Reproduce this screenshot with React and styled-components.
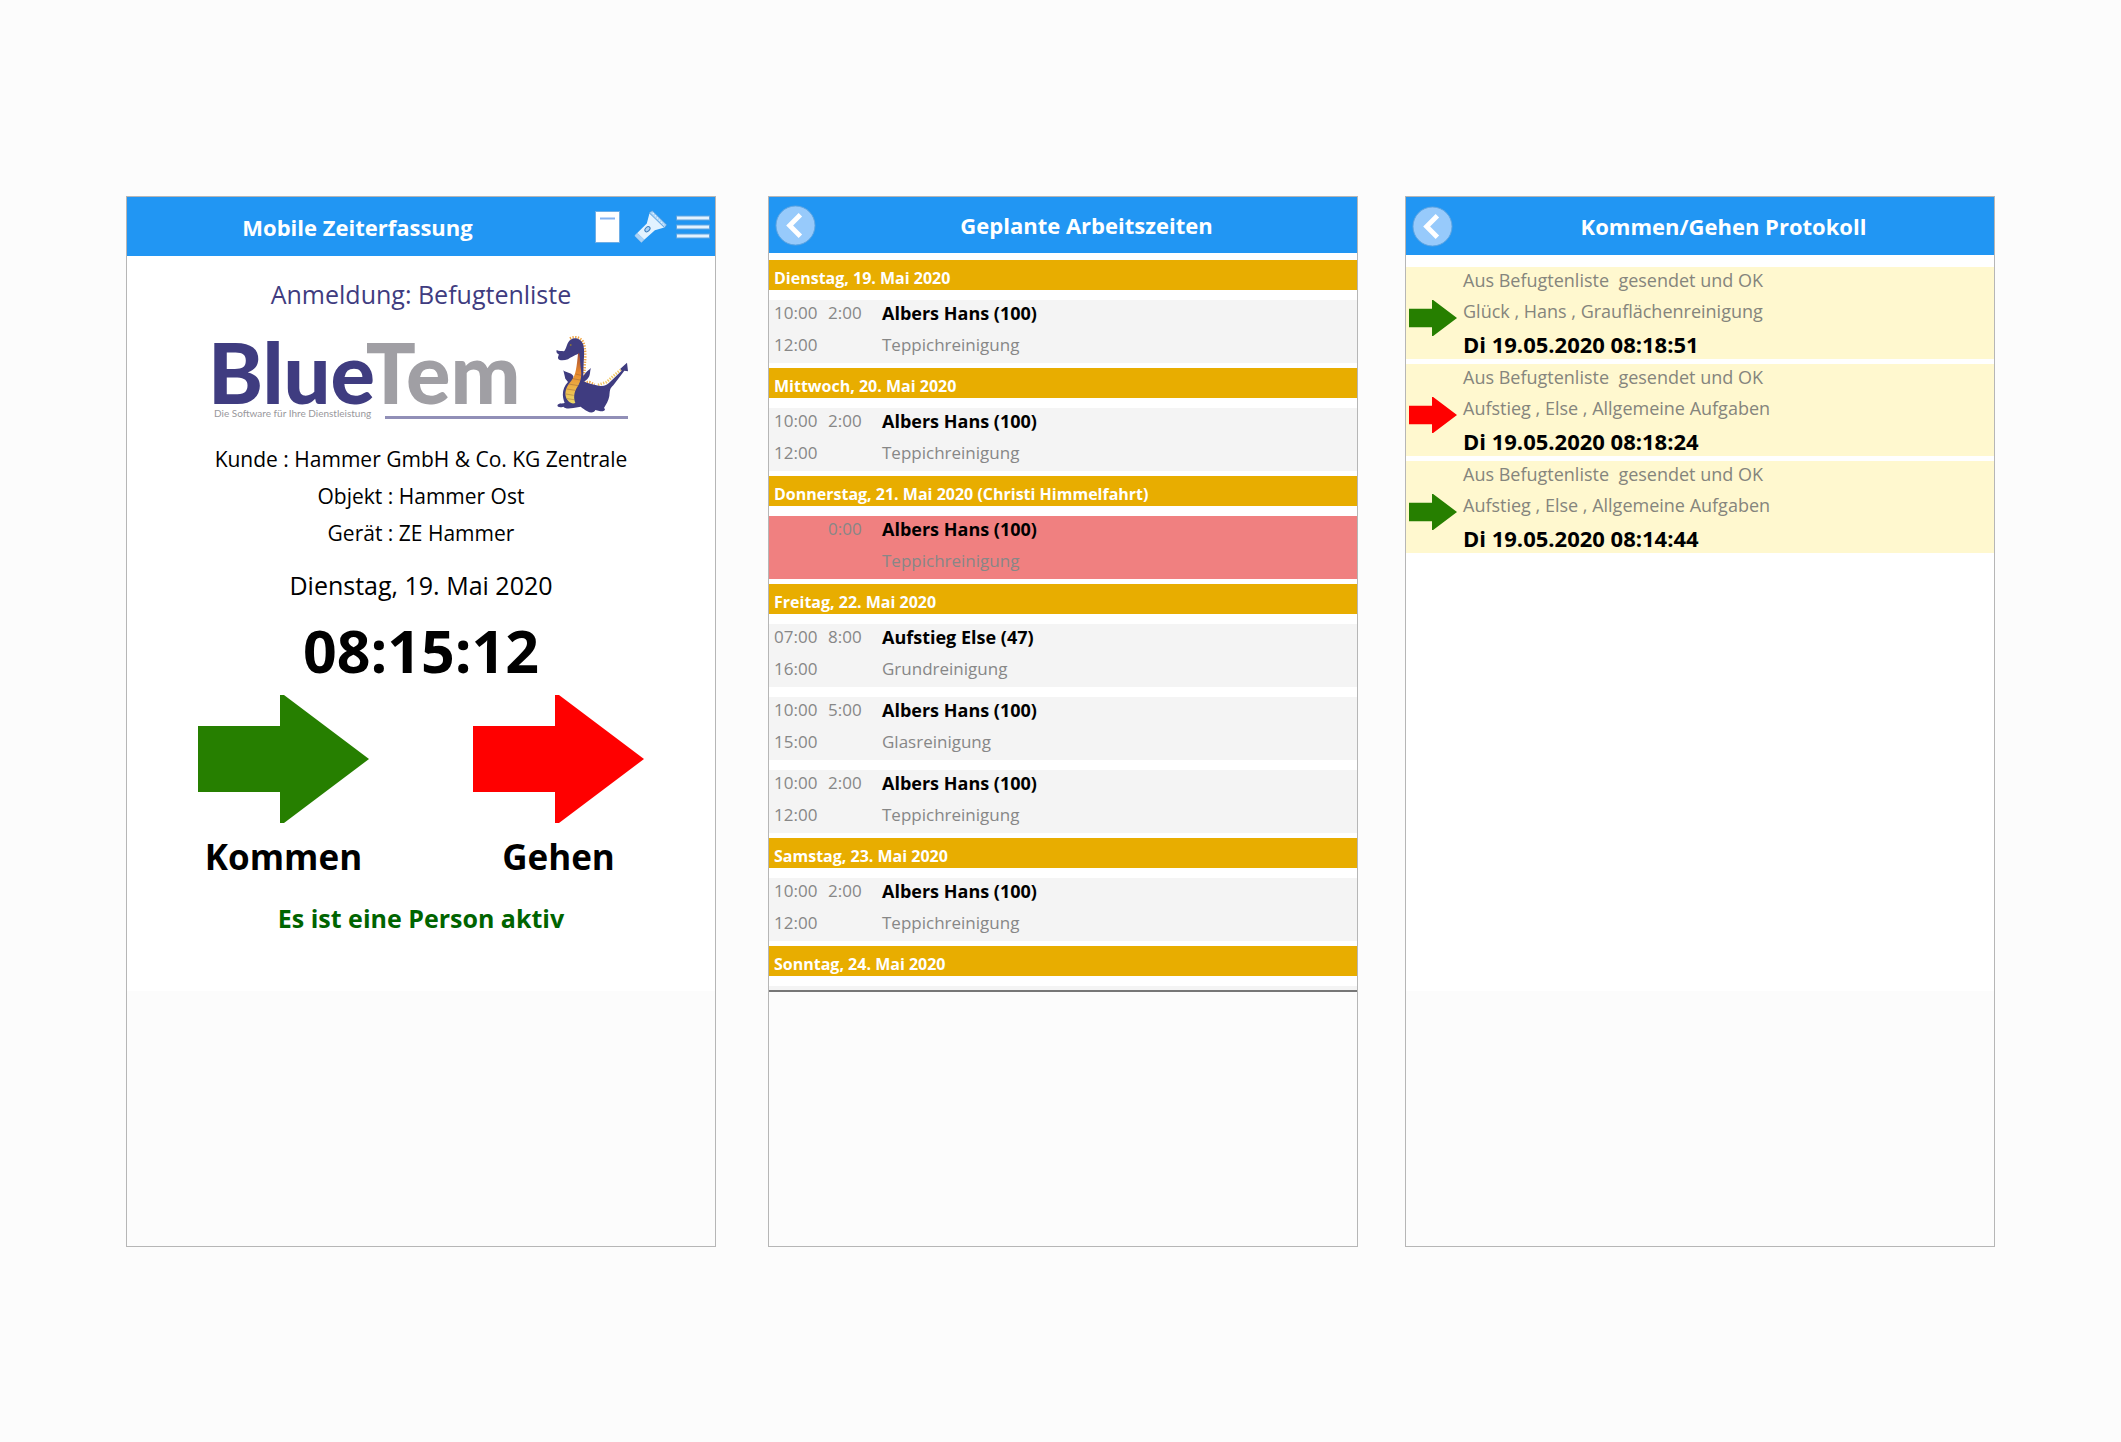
import styled, { createGlobalStyle } from "styled-components"

const days = [
    {
        title: "Dienstag, 19. Mai 2020",
        shifts: [{ from: "10:00", to: "12:00", hours: "2:00", name: "Albers Hans (100)", task: "Teppichreinigung" }],
    },
    {
        title: "Mittwoch, 20. Mai 2020",
        shifts: [{ from: "10:00", to: "12:00", hours: "2:00", name: "Albers Hans (100)", task: "Teppichreinigung" }],
    },
    {
        title: "Donnerstag, 21. Mai 2020 (Christi Himmelfahrt)",
        shifts: [{ from: "", to: "", hours: "0:00", name: "Albers Hans (100)", task: "Teppichreinigung", holiday: true }],
    },
    {
        title: "Freitag, 22. Mai 2020",
        shifts: [
            { from: "07:00", to: "16:00", hours: "8:00", name: "Aufstieg Else (47)", task: "Grundreinigung" },
            { from: "10:00", to: "15:00", hours: "5:00", name: "Albers Hans (100)", task: "Glasreinigung" },
            { from: "10:00", to: "12:00", hours: "2:00", name: "Albers Hans (100)", task: "Teppichreinigung" },
        ],
    },
    {
        title: "Samstag, 23. Mai 2020",
        shifts: [{ from: "10:00", to: "12:00", hours: "2:00", name: "Albers Hans (100)", task: "Teppichreinigung" }],
    },
];

const entries = [
    { status: "Aus Befugtenliste  gesendet und OK", person: "Glück , Hans , Grauflächenreinigung", time: "Di 19.05.2020 08:18:51", color: "#267f00" },
    { status: "Aus Befugtenliste  gesendet und OK", person: "Aufstieg , Else , Allgemeine Aufgaben", time: "Di 19.05.2020 08:18:24", color: "#ff0000" },
    { status: "Aus Befugtenliste  gesendet und OK", person: "Aufstieg , Else , Allgemeine Aufgaben", time: "Di 19.05.2020 08:14:44", color: "#267f00" },
];

const Arrow = ({ color }) => (
    <svg viewBox="0 0 171 128" preserveAspectRatio="none" aria-hidden="true">
        <path d="M0 31H82V0H86L171 64L86 128H82V97H0Z" fill={color} />
    </svg>
);

const Dragon = () => (
    <svg viewBox="18 18 216 231" aria-hidden="true">
        <defs>
            <linearGradient id="belly" x1="0" y1="0" x2="0" y2="1">
                <stop offset="0" stopColor="#a04a35" />
                <stop offset="0.4" stopColor="#e8892c" />
                <stop offset="0.75" stopColor="#eebb4d" />
                <stop offset="1" stopColor="#e9d968" />
            </linearGradient>
        </defs>
        {/* spikes along the neck, back and tail */}
        <g fill="none" stroke="#f0a645" strokeWidth="8" strokeDasharray="4 4">
            <path d="M60 26C76 16 94 24 100 38C107 56 106 84 104 104C104 124 101 140 98 152" />
            <path d="M102 158L118 156L134 164" />
            <path d="M144 165L170 156L190 138L214 118" stroke="#f2c763" />
        </g>
        <g fill="#3f3c80">
            <path d="M20 60C26 64 34 62 42 64C50 56 50 36 62 29C76 20 94 27 100 44C104 60 102 80 101 98L99 162L78 166L84 104C86 92 88 80 84 72C74 76 62 82 54 88C42 92 28 92 25 87C22 80 28 76 26 73C20 70 18 66 20 60Z" />
            <path d="M86 164L98 152C112 160 128 162 146 167C160 170 170 166 180 156L215 122L211 116L231 98L234 124L223 122L190 166C178 176 180 184 178 198C176 212 168 224 162 234C170 240 160 246 148 243L136 240C134 248 122 250 112 244C104 238 98 236 92 230L70 234C56 236 44 236 40 230C28 234 20 230 23 224C28 218 38 222 44 218C34 196 38 172 54 156L46 146L40 121C50 130 62 126 70 138L70 152L86 164Z" />
            <path d="M92 160C96 138 106 128 123 114C118 126 124 140 106 152Z" />
        </g>
        <path d="M87 68C91 80 90 100 93 120C96 142 90 160 80 174C72 188 70 204 76 219C64 224 52 214 48 202C43 184 50 168 64 152C78 136 80 110 84 72Z" fill="url(#belly)" />
        <path d="M77 132L93 136M68 146L91 150M56 162L85 167M50 177L76 181M48 192L71 196M51 206L72 209" stroke="#8a5538" strokeWidth="2" opacity="0.6" />
        <circle cx="62" cy="45" r="3" fill="#86733a" />
    </svg>
);

const BackButton = () => (
    <Back type="button" aria-label="Zurück">
        <svg viewBox="0 0 42 42" width="41" height="41" aria-hidden="true">
            <circle cx="21" cy="21" r="20" fill="#97cafb" stroke="#5fa3df" />
            <path d="M26 10L15 21L26 32" fill="none" stroke="#fff" strokeWidth="5" />
        </svg>
    </Back>
);

const App = () => {
    return (
        <Page>
            <GlobalStyle />

            <Panel>
                <Screen>
                    <Header $height={59}>
                        <Title>Mobile Zeiterfassung</Title>
                        <Actions>
                            <IconButton type="button" aria-label="Liste">
                                <svg viewBox="0 0 50 64" width="25" height="32" aria-hidden="true">
                                    <rect x="1" y="1" width="48" height="62" fill="#fff" stroke="#6eaee6" strokeWidth="2" />
                                    <path d="M10 15H40" stroke="#85b3f2" strokeWidth="4" />
                                </svg>
                            </IconButton>
                            <IconButton type="button" aria-label="Taschenlampe">
                                <svg viewBox="12 14 98 98" width="33" height="33" aria-hidden="true">
                                    <path d="M58 24L102 66L74 74L34 110L14 90L50 54Z" fill="#e2f2ff" />
                                    <path d="M57 22L66 16L109 58L103 67Z" fill="#a9d3f8" stroke="#5296d4" strokeWidth="2" />
                                    <path d="M68 23L100 57" stroke="#e2f2ff" strokeWidth="4" strokeDasharray="4 5" />
                                    <path d="M14 91L22 83L42 102L34 111Z" fill="#a9d3f8" stroke="#5fa3df" />
                                    <ellipse cx="52" cy="71" rx="9" ry="6" transform="rotate(-45 52 71)" fill="#a9d3f8" stroke="#3f7fbd" strokeWidth="3" />
                                </svg>
                            </IconButton>
                            <IconButton type="button" aria-label="Menü">
                                <svg viewBox="0 0 34 32" width="34" height="32" aria-hidden="true">
                                    <path d="M0 7H34M0 16H34M0 25H34" stroke="#5fa3df" strokeWidth="5" />
                                    <path d="M1 7H33M1 16H33M1 25H33" stroke="#e2f2ff" strokeWidth="3" />
                                </svg>
                            </IconButton>
                        </Actions>
                    </Header>

                    <Clock>
                        <Login>Anmeldung: Befugtenliste</Login>

                        <Logo>
                            <Brand>
                                <BrandName>Blue<span>Tem</span></BrandName>
                                <Dragon />
                            </Brand>
                            <Tagline>Die Software für Ihre Dienstleistung</Tagline>
                        </Logo>

                        <Details>
                            <li>Kunde : Hammer GmbH &amp; Co. KG Zentrale</li>
                            <li>Objekt : Hammer Ost</li>
                            <li>Gerät : ZE Hammer</li>
                        </Details>

                        <Today>Dienstag, 19. Mai 2020</Today>
                        <Time>08:15:12</Time>

                        <Stamps>
                            <StampButton type="button"><Arrow color="#267f00" />Kommen</StampButton>
                            <StampButton type="button"><Arrow color="#ff0000" />Gehen</StampButton>
                        </Stamps>

                        <Active>Es ist eine Person aktiv</Active>
                    </Clock>
                </Screen>
            </Panel>

            <Panel $gap={52}>
                <Screen $cut>
                    <Header $height={56}>
                        <BackButton />
                        <Title>Geplante Arbeitszeiten</Title>
                    </Header>

                    <Schedule>
                        {days.map((day) => (
                            <Day key={day.title}>
                                <DayTitle>{day.title}</DayTitle>
                                {day.shifts.map((shift, i) => (
                                    <Shift key={i} $holiday={shift.holiday}>
                                        <span>{shift.from}</span>
                                        <span>{shift.hours}</span>
                                        <strong>{shift.name}</strong>
                                        <span>{shift.to}</span>
                                        <span />
                                        <span>{shift.task}</span>
                                    </Shift>
                                ))}
                            </Day>
                        ))}
                        <DayTitle>Sonntag, 24. Mai 2020</DayTitle>
                        <NextShift />
                    </Schedule>
                </Screen>
            </Panel>

            <Panel $gap={47}>
                <Screen>
                    <Header $height={58}>
                        <BackButton />
                        <Title>Kommen/Gehen Protokoll</Title>
                    </Header>

                    <Log>
                        {entries.map((entry) => (
                            <Entry key={entry.time}>
                                <Arrow color={entry.color} />
                                <div>
                                    <EntryLine>{entry.status}</EntryLine>
                                    <EntryLine>{entry.person}</EntryLine>
                                    <EntryTime>{entry.time}</EntryTime>
                                </div>
                            </Entry>
                        ))}
                    </Log>
                </Screen>
            </Panel>
        </Page>
    )
};

const GlobalStyle = createGlobalStyle`
    * {
        box-sizing: border-box;
    }

    body, h1, h2, p, ul {
        margin: 0;
        padding: 0;
    }

    body {
        background-color: #fcfcfc;
        color: black;
        font-family: "Open Sans", "Noto Sans", sans-serif;
    }

    ul {
        list-style: none;
    }

    button {
        border: none;
        padding: 0;
        background-color: transparent;
        color: inherit;
        font-family: inherit;
        cursor: pointer;
    }

    svg {
        display: block;
    }
`;

const Page = styled.main`
    display: flex;
    min-height: 100vh;
    padding: 196px 126px 195px;
`;

const Panel = styled.section`
    flex: 1 1 0;
    min-width: 0;
    margin-left: ${({ $gap }) => $gap || 0}px;
    border: 1px solid #b6b6b6;
`;

const Screen = styled.div`
    min-height: 794px;
    background-color: white;
    border-bottom: ${({ $cut }) => ($cut ? "2px solid #777" : "none")};
`;

const Header = styled.header`
    display: flex;
    align-items: center;
    height: ${({ $height }) => $height}px;
    background-color: #2196f3;
    color: white;
`;

const Title = styled.h1`
    flex: 1;
    text-align: center;
    font-size: 22px;
    font-weight: 700;
`;

const Actions = styled.div`
    display: flex;
    gap: 5px;
    padding-right: 3px;
`;

const IconButton = styled.button`
    display: flex;
    justify-content: center;
    align-items: center;
    width: 38px;
    height: 38px;
`;

const Back = styled.button`
    margin-left: 6px;
`;

const Clock = styled.div`
    display: flex;
    flex-direction: column;
    align-items: center;
    padding: 21px 0 55px;
`;

const Login = styled.h2`
    color: #3f3c80;
    font-size: 25px;
    font-weight: 400;
    line-height: 34px;
`;

const Logo = styled.div`
    width: 414px;
    margin-top: 25px;
`;

const Brand = styled.div`
    display: flex;
    justify-content: space-between;
    align-items: flex-end;

    svg {
        width: 72px;
        height: 77px;
        margin-bottom: -7px;
    }
`;

const BrandName = styled.p`
    margin-left: -6px;
    color: #3f3c80;
    font-family: Lato, "Open Sans", sans-serif;
    font-size: 83px;
    font-weight: 900;
    line-height: 68px;

    span {
        color: #a09fa4;
    }
`;

const Tagline = styled.p`
    display: flex;
    align-items: flex-end;
    gap: 14px;
    color: #99989c;
    font-family: Lato, "Open Sans", sans-serif;
    font-size: 10px;
    line-height: 14px;

    &::after {
        content: "";
        flex: 1;
        height: 3px;
        margin-bottom: 1px;
        background-color: #918fb7;
    }
`;

const Details = styled.ul`
    margin-top: 21px;
    text-align: center;
    font-size: 21px;
    line-height: 37px;
`;

const Today = styled.p`
    margin-top: 16px;
    font-size: 25px;
    line-height: 34px;
`;

const Time = styled.p`
    margin-top: 13px;
    font-size: 59px;
    font-weight: 700;
    line-height: 70px;
`;

const Stamps = styled.div`
    display: flex;
    gap: 104px;
    margin-top: 10px;
`;

const StampButton = styled.button`
    width: 171px;
    font-size: 35px;
    font-weight: 700;
    line-height: 48px;

    svg {
        width: 100%;
        height: 128px;
        margin-bottom: 10px;
    }
`;

const Active = styled.p`
    margin-top: 20px;
    color: #006400;
    font-size: 25px;
    font-weight: 700;
    line-height: 34px;
`;

const Schedule = styled.div`
    padding-top: 7px;
`;

const Day = styled.div`
    padding-bottom: 5px;
`;

const DayTitle = styled.h2`
    padding: 6px 5px 0;
    background-color: #e8ad00;
    color: white;
    font-size: 16px;
    font-weight: 700;
    line-height: 24px;
`;

const Shift = styled.div`
    display: grid;
    grid-template-columns: 54px 54px 1fr;
    grid-auto-rows: 26px;
    row-gap: 6px;
    margin-top: 10px;
    padding: 0 5px 5px;
    background-color: ${({ $holiday }) => ($holiday ? "#f08080" : "#f4f4f4")};
    color: #878787;
    font-size: 17px;
    line-height: 26px;

    strong {
        color: black;
        font-size: 18px;
    }
`;

const NextShift = styled.div`
    height: 4px;
    margin-top: 10px;
    background-color: #f4f4f4;
`;

const Log = styled.ul`
    display: flex;
    flex-direction: column;
    gap: 5px;
    padding-top: 12px;
`;

const Entry = styled.li`
    display: grid;
    grid-template-columns: 48px 1fr;
    column-gap: 6px;
    align-items: center;
    padding: 1px 3px 0;
    background-color: #fff8cf;

    svg {
        width: 48px;
        height: 36px;
        margin-top: 9px;
    }
`;

const EntryLine = styled.p`
    margin-bottom: 6px;
    color: #85857d;
    font-size: 18px;
    line-height: 25px;
    white-space: pre;
`;

const EntryTime = styled.p`
    margin-top: -1px;
    font-size: 22px;
    font-weight: 700;
    line-height: 30px;
`;

export default App;
